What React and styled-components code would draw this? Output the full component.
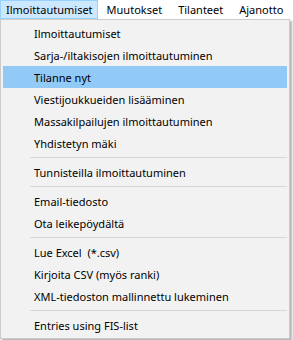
import React from "react";
import styled, { createGlobalStyle } from "styled-components";

const Global = createGlobalStyle`
  html, body { margin: 0; padding: 0; background: #ffffff; }
  body { font-family: "Noto Sans", "Open Sans", sans-serif; }
`;

const Page = styled.div`
  width: 293px;
  height: 340px;
  overflow: hidden;
  position: relative;
  background: #ffffff;
`;

const MenuBar = styled.div`
  display: flex;
  height: 19px;
  background: #ffffff;
`;

const BarItem = styled.div`
  box-sizing: border-box;
  height: 19px;
  padding: 0 ${(p) => (p.$first ? 4 : 6)}px 0 ${(p) => (p.$first ? 5 : 8)}px;
  display: flex;
  align-items: center;
  font-size: 11px;
  color: #000;
  white-space: nowrap;
  background: ${(p) => (p.$active ? "#cce8ff" : "transparent")};
  border: 1px solid ${(p) => (p.$active ? "#99d1ff" : "transparent")};
`;

const Dropdown = styled.div`
  position: absolute;
  left: 0;
  top: 19px;
  box-sizing: border-box;
  width: 290px;
  padding: 2px 2px 2px 2px;
  background: #f2f2f2;
  border: 1px solid #cccccc;
  box-shadow: 2px 2px 2px rgba(0, 0, 0, 0.3);
  display: flex;
  flex-direction: column;
`;

const Item = styled.div`
  height: 22px;
  display: flex;
  align-items: center;
  padding-left: 31px;
  font-size: 11px;
  color: #000;
  white-space: pre;
  background: ${(p) => (p.$hl ? "#91c9f7" : "transparent")};
`;

const Separator = styled.div`
  height: 7px;
  display: flex;
  align-items: center;
  padding-left: 27px;
  &::after {
    content: "";
    flex: 1;
    height: 1px;
    background: #d7d7d7;
  }
`;

const groups = [
  [
    "Ilmoittautumiset",
    "Sarja-/iltakisojen ilmoittautuminen",
    "Tilanne nyt",
    "Viestijoukkueiden lisääminen",
    "Massakilpailujen ilmoittautuminen",
    "Yhdistetyn mäki",
  ],
  ["Tunnisteilla ilmoittautuminen"],
  ["Email-tiedosto", "Ota leikepöydältä"],
  ["Lue Excel  (*.csv)", "Kirjoita CSV (myös ranki)", "XML-tiedoston mallinnettu lukeminen"],
  ["Entries using FIS-list"],
];

export default function App() {
  return (
    <Page>
      <Global />
      <MenuBar>
        <BarItem $active $first>Ilmoittautumiset</BarItem>
        <BarItem>Muutokset</BarItem>
        <BarItem>Tilanteet</BarItem>
        <BarItem>Ajanotto</BarItem>
      </MenuBar>
      <Dropdown>
        {groups.map((g, gi) => (
          <React.Fragment key={gi}>
            {gi > 0 && <Separator />}
            {g.map((t) => (
              <Item key={t} $hl={t === "Tilanne nyt"}>
                {t}
              </Item>
            ))}
          </React.Fragment>
        ))}
      </Dropdown>
    </Page>
  );
}
